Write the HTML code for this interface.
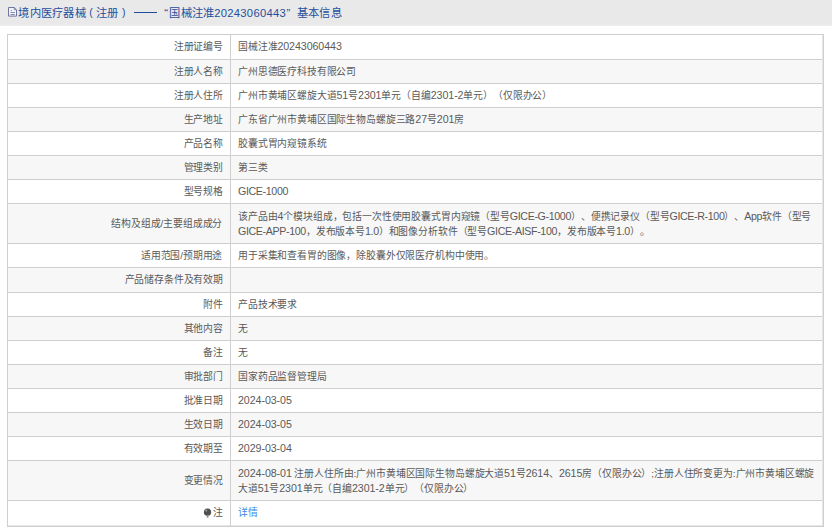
<!DOCTYPE html>
<html lang="zh-CN"><head><meta charset="utf-8">
<style>
html,body{margin:0;padding:0;width:832px;height:532px;overflow:hidden;background:#fff;}
body{position:relative;text-spacing-trim:space-all;font-family:"Liberation Sans",sans-serif;}
.hdr{position:absolute;left:0;top:0;width:832px;height:25px;background:#e9e9e9;border-bottom:1px solid #ededf0;}
.tw{position:absolute;left:0;top:3px;width:600px;height:30px;font-size:14px;line-height:24px;color:#1f4f9c;white-space:nowrap;transform:scale(0.8033);transform-origin:0 0;}
.tw span{position:absolute;top:0;}
.dg{letter-spacing:0.35px;}
.pa{font-size:13px;}
.dash{position:absolute;left:133.5px;top:11.8px;width:23.8px;height:1.3px;background:#1f4f9c;}
.doc{position:absolute;left:8px;top:7px;}
.r{position:absolute;left:7px;width:816px;}
.hl{position:absolute;left:7px;width:817px;height:1px;background:#cfcfcf;}
.vl{position:absolute;top:34px;height:493px;width:1px;background:#cfcfcf;}
.k,.v{position:absolute;font-size:12px;line-height:19px;color:#5a5a5a;font-weight:300;white-space:nowrap;}
.k{right:609.2px;transform:scale(0.8208);transform-origin:100% 0;text-align:right;}
.v{left:237.6px;transform:scale(0.8208);transform-origin:0 0;}
.link{color:#3a8ae6;font-weight:400;}
.l{font-size:13px;letter-spacing:-0.1px;font-weight:400;}
.la{letter-spacing:-0.45px;}
.bulb{display:inline-block;width:7px;height:8px;border-radius:50%;background:#555;margin-right:2px;}
</style></head><body>
<div class="hdr"></div>
<svg style="position:absolute;left:6px;top:5px" width="13" height="13" viewBox="0 0 13 13"><path d="M2.5 2.5H8.2L10.5 4.8V11.1H2.5Z" fill="#f2f2f9" stroke="#66719c" stroke-width="0.95"/><path d="M8.3 2.7V4.7H10.2" fill="none" stroke="#66719c" stroke-width="0.8"/><path d="M4.8 5.5H5.9M4.5 7.5H8.8M4.5 9.5H8.8" stroke="#66719c" stroke-width="0.8"/></svg>
<div class="tw"><span class="" style="left:23.03px">境内医疗器械</span><span class="pa" style="left:111.17px">(</span><span class="" style="left:119.51px">注册</span><span class="pa" style="left:151.75px">)</span><span class="" style="left:204.41px">“</span><span class="" style="left:210.76px">国械注准</span><span class="dg" style="left:266.65px">20243060443</span><span class="" style="left:356.65px">”</span><span class="" style="left:369.72px">基本信息</span></div><div class="dash"></div>
<div class="r" style="top:34px;height:25px;background:#ffffff"></div><div class="k" style="top:39.20px">注册证编号</div><div class="v" style="top:39.20px;line-height:19px">国械注准<span class="l">20243060443</span></div><div class="r" style="top:59px;height:24px;background:#f7f7f7"></div><div class="k" style="top:63.70px">注册人名称</div><div class="v" style="top:63.70px;line-height:19px">广州思德医疗科技有限公司</div><div class="r" style="top:83px;height:24px;background:#ffffff"></div><div class="k" style="top:87.70px">注册人住所</div><div class="v" style="top:87.70px;line-height:19px">广州市黄埔区螺旋大道<span class="l">51</span>号<span class="l">2301</span>单元（自编<span class="l">2301-2</span>单元）（仅限办公）</div><div class="r" style="top:107px;height:24px;background:#f7f7f7"></div><div class="k" style="top:111.70px">生产地址</div><div class="v" style="top:111.70px;line-height:19px">广东省广州市黄埔区国际生物岛螺旋三路<span class="l">27</span>号<span class="l">201</span>房</div><div class="r" style="top:131px;height:24px;background:#ffffff"></div><div class="k" style="top:135.70px">产品名称</div><div class="v" style="top:135.70px;line-height:19px">胶囊式胃内窥镜系统</div><div class="r" style="top:155px;height:24px;background:#f7f7f7"></div><div class="k" style="top:159.70px">管理类别</div><div class="v" style="top:159.70px;line-height:19px">第三类</div><div class="r" style="top:179px;height:24px;background:#ffffff"></div><div class="k" style="top:183.70px">型号规格</div><div class="v" style="top:183.70px;line-height:19px"><span class="l la">GICE-1000</span></div><div class="r" style="top:203px;height:40px;background:#f7f7f7"></div><div class="k" style="top:215.70px">结构及组成/主要组成成分</div><div class="v" style="top:209.02px;line-height:18.5px">该产品由<span class="l">4</span>个模块组成，包括一次性使用胶囊式胃内窥镜（型号<span class="l la">GICE-G-1000</span>）、便携记录仪（型号<span class="l la">GICE-R-100</span>）、<span class="l la">App</span>软件（型号<br><span class="l la">GICE-APP-100</span>，发布版本号<span class="l la">1.0</span>）和图像分析软件（型号<span class="l la">GICE-AISF-100</span>，发布版本号<span class="l la">1.0</span>）。</div><div class="r" style="top:243px;height:24px;background:#ffffff"></div><div class="k" style="top:247.70px">适用范围/预期用途</div><div class="v" style="top:247.70px;line-height:19px">用于采集和查看胃的图像，除胶囊外仅限医疗机构中使用。</div><div class="r" style="top:267px;height:25px;background:#f7f7f7"></div><div class="k" style="top:272.20px">产品储存条件及有效期</div><div class="v" style="top:272.20px;line-height:19px"></div><div class="r" style="top:292px;height:24px;background:#ffffff"></div><div class="k" style="top:296.70px">附件</div><div class="v" style="top:296.70px;line-height:19px">产品技术要求</div><div class="r" style="top:316px;height:24px;background:#f7f7f7"></div><div class="k" style="top:320.70px">其他内容</div><div class="v" style="top:320.70px;line-height:19px">无</div><div class="r" style="top:340px;height:24px;background:#ffffff"></div><div class="k" style="top:344.70px">备注</div><div class="v" style="top:344.70px;line-height:19px">无</div><div class="r" style="top:364px;height:24px;background:#f7f7f7"></div><div class="k" style="top:368.70px">审批部门</div><div class="v" style="top:368.70px;line-height:19px">国家药品监督管理局</div><div class="r" style="top:388px;height:24px;background:#ffffff"></div><div class="k" style="top:392.70px">批准日期</div><div class="v" style="top:392.70px;line-height:19px"><span class="l">2024-03-05</span></div><div class="r" style="top:412px;height:24px;background:#f7f7f7"></div><div class="k" style="top:416.70px">生效日期</div><div class="v" style="top:416.70px;line-height:19px"><span class="l">2024-03-05</span></div><div class="r" style="top:436px;height:24px;background:#ffffff"></div><div class="k" style="top:440.70px">有效期至</div><div class="v" style="top:440.70px;line-height:19px"><span class="l">2029-03-04</span></div><div class="r" style="top:460px;height:40px;background:#f7f7f7"></div><div class="k" style="top:472.70px">变更情况</div><div class="v" style="top:466.02px;line-height:18.5px"><span class="l">2024-08-01</span> 注册人住所由:广州市黄埔区国际生物岛螺旋大道<span class="l">51</span>号<span class="l">2614</span>、<span class="l">2615</span>房（仅限办公）;注册人住所变更为:广州市黄埔区螺旋<br>大道<span class="l">51</span>号<span class="l">2301</span>单元（自编<span class="l">2301-2</span>单元）（仅限办公）</div><div class="r" style="top:500px;height:25px;background:#ffffff"></div><div class="k" style="top:505.20px">注</div><div class="v link" style="top:505.20px">详情</div>
<div class="hl" style="top:34px"></div><div class="hl" style="top:59px"></div><div class="hl" style="top:83px"></div><div class="hl" style="top:107px"></div><div class="hl" style="top:131px"></div><div class="hl" style="top:155px"></div><div class="hl" style="top:179px"></div><div class="hl" style="top:203px"></div><div class="hl" style="top:243px"></div><div class="hl" style="top:267px"></div><div class="hl" style="top:292px"></div><div class="hl" style="top:316px"></div><div class="hl" style="top:340px"></div><div class="hl" style="top:364px"></div><div class="hl" style="top:388px"></div><div class="hl" style="top:412px"></div><div class="hl" style="top:436px"></div><div class="hl" style="top:460px"></div><div class="hl" style="top:500px"></div><div class="hl" style="top:525px;height:1px;background:#e6e6ea;width:816px"></div><div class="hl" style="top:526px;height:1px;"></div>
<div class="vl" style="left:7px"></div>
<div class="vl" style="left:230px"></div>
<svg style="position:absolute;left:200px;top:505px" width="16" height="16" viewBox="0 0 16 16"><circle cx="7.5" cy="7.2" r="3.6" fill="#505050"/><rect x="6.7" y="10.2" width="1.8" height="2.4" fill="#8a8a8a"/><circle cx="6.2" cy="5.6" r="1.1" fill="#9a9a9a"/></svg>
<div class="vl" style="left:822px;top:35px;height:491px;background:#e6e6ea"></div><div class="vl" style="left:823px"></div>
</body></html>
